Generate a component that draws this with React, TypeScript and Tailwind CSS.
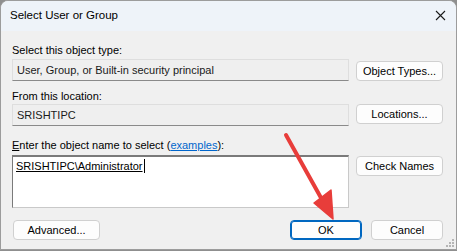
import React from 'react';

const font = { fontFamily: '"Liberation Sans", Arial, sans-serif' };

const Button: React.FC<{ label: React.ReactNode; primary?: boolean; className?: string }> = ({ label, primary, className }) => (
  <button
    type="button"
    className={`flex h-[20px] items-center justify-center rounded-[4px] bg-[#fdfdfd] text-[11px] leading-none text-black ${
      primary ? 'border border-[#0067c0] shadow-[inset_0_0_0_1px_#0067c0]' : 'border border-[#d0d0d0]'
    } ${className ?? 'w-full'}`}
  >
    {label}
  </button>
);

const Field: React.FC<{ value: string }> = ({ value }) => (
  <div className="flex h-[22px] items-center border border-[#dedede] border-b-[#8a8a8a] bg-[#efefef] px-[4px] text-[11px] text-[#1a1a1a]">
    {value}
  </div>
);

const App: React.FC = () => {
  return (
    <div className="relative h-[251px] w-[457px] bg-[#8f8f8f]" style={font}>
      <div className="relative flex h-[250px] w-[457px] flex-col overflow-hidden rounded-t-[8px] border border-[#9c9c9c] bg-[#f0f0f0]">
        {/* title bar */}
        <div className="flex h-[30px] shrink-0 items-center justify-between bg-[#eef3f9] pl-[9px] pr-[9px]">
          <span className="text-[11.5px] text-black">Select User or Group</span>
          <svg width="11" height="11" viewBox="0 0 11 11" className="mr-[1px] mt-[-2px]">
            <path d="M1 1 L10 10 M10 1 L1 10" stroke="#1a1a1a" strokeWidth="1.1" />
          </svg>
        </div>

        {/* body */}
        <div className="grid grid-cols-[337px_87px] gap-x-[7px] px-[11px] pt-[12px] text-[11px] text-black">
          <div className="col-span-2 leading-[15px]">Select this object type:</div>
          <div className="mt-[1px]">
            <Field value="User, Group, or Built-in security principal" />
          </div>
          <div className="mt-[3px]">
            <Button label="Object Types..." />
          </div>

          <div className="col-span-2 mt-[8px] leading-[15px]">From this location:</div>
          <div>
            <Field value="SRISHTIPC" />
          </div>
          <div>
            <Button label="Locations..." />
          </div>

          <div className="col-span-2 mt-[12px] leading-[15px]">
            <span className="underline">E</span>nter the object name to select (
            <span className="text-[#0066cc] underline">examples</span>):
          </div>
          <div className="mt-[2px]">
            <div className="h-[53px] border border-[#c9c9c9] border-l-[#7a7a7a] border-t-2 border-t-[#7a7a7a] bg-white px-[3px] pt-[1px]">
              <span className="inline-flex items-center">
                <span className="text-[11px] leading-[14px] text-black underline">SRISHTIPC\Administrator</span>
                <span className="ml-[1px] inline-block h-[14px] w-[1px] bg-black" />
              </span>
            </div>
          </div>
          <div className="mt-[3px]">
            <Button label="Check Names" />
          </div>
        </div>

        <div className="mt-[12px] flex items-center pl-[12px] pr-[13px]">
          <Button label="Advanced..." className="w-[87px]" />
          <div className="flex-1" />
          <Button label="OK" primary className="w-[72px]" />
          <Button label="Cancel" className="ml-[9px] w-[72px]" />
        </div>

        {/* resize grip */}
        <svg width="10" height="10" viewBox="0 0 10 10" className="absolute bottom-[1px] right-[1px]">
          <rect x="7" y="1" width="2" height="2" fill="#b5b5b5" />
          <rect x="4" y="4" width="2" height="2" fill="#b5b5b5" />
          <rect x="7" y="4" width="2" height="2" fill="#b5b5b5" />
          <rect x="1" y="7" width="2" height="2" fill="#b5b5b5" />
          <rect x="4" y="7" width="2" height="2" fill="#b5b5b5" />
          <rect x="7" y="7" width="2" height="2" fill="#b5b5b5" />
        </svg>
      </div>

      {/* annotation arrow */}
      <svg width="457" height="251" viewBox="0 0 457 251" className="pointer-events-none absolute left-0 top-0">
        <line x1="286" y1="135" x2="325" y2="205" stroke="#e83d3a" strokeWidth="4" strokeLinecap="round" />
        <polygon points="314,203 333,219 331,190" fill="#e83d3a" stroke="#e83d3a" strokeWidth="1.5" strokeLinejoin="round" />
      </svg>
    </div>
  );
};

export default App;
